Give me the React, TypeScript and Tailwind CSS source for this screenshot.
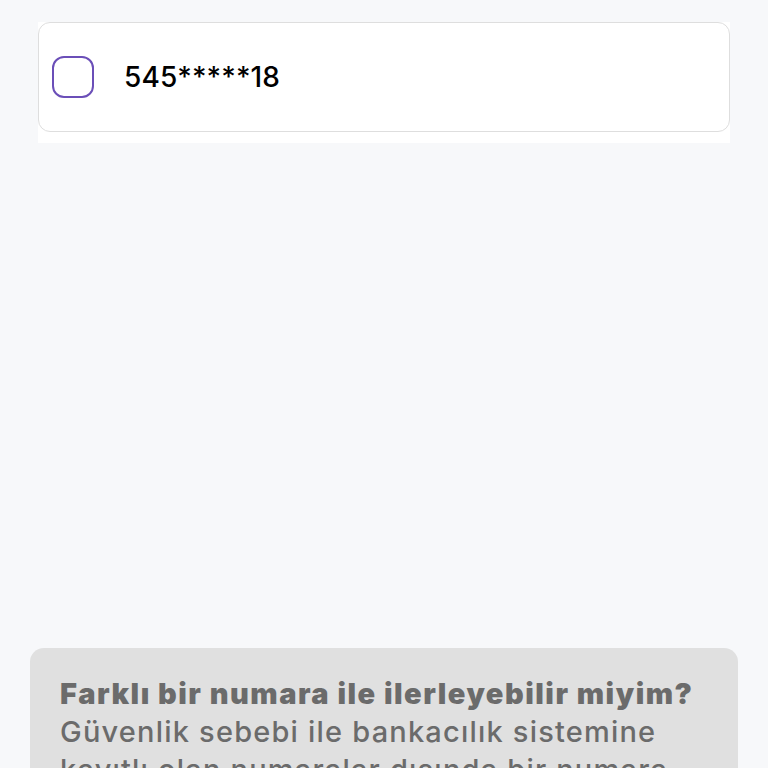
import React from 'react';

const App: React.FC = () => {
  return (
    <div
      className="w-[768px] h-[768px] overflow-hidden bg-[#f7f8fa] flex flex-col"
      style={{ fontFamily: 'Inter, "Noto Sans", sans-serif' }}
    >
      <div className="mt-[22px] mx-[38px] bg-white pb-[11px]">
        <div className="h-[110px] rounded-[12px] border border-[#dedede] flex items-center pl-[13px]">
          <div className="w-[42px] h-[42px] rounded-[12px] border-2 border-[#6b4fb8]" />
          <span className="ml-[30px] text-[28px] font-medium text-black tracking-[0.1px]">545*****18</span>
        </div>
      </div>

      <div className="mt-auto mx-[30px] h-[120px] rounded-t-[14px] bg-[#e0e0e0] px-[30px] pt-[27px] text-[#6b6b6b] leading-[38px]">
        <p className="text-[29px] font-black tracking-[1.5px] whitespace-nowrap">Farklı bir numara ile ilerleyebilir miyim?</p>
        <p className="text-[29px] font-medium tracking-[1.2px] whitespace-nowrap">
          Güvenlik sebebi ile bankacılık sistemine
          <br />
          kayıtlı olan numaralar dışında bir numara
        </p>
      </div>
    </div>
  );
};

export default App;
